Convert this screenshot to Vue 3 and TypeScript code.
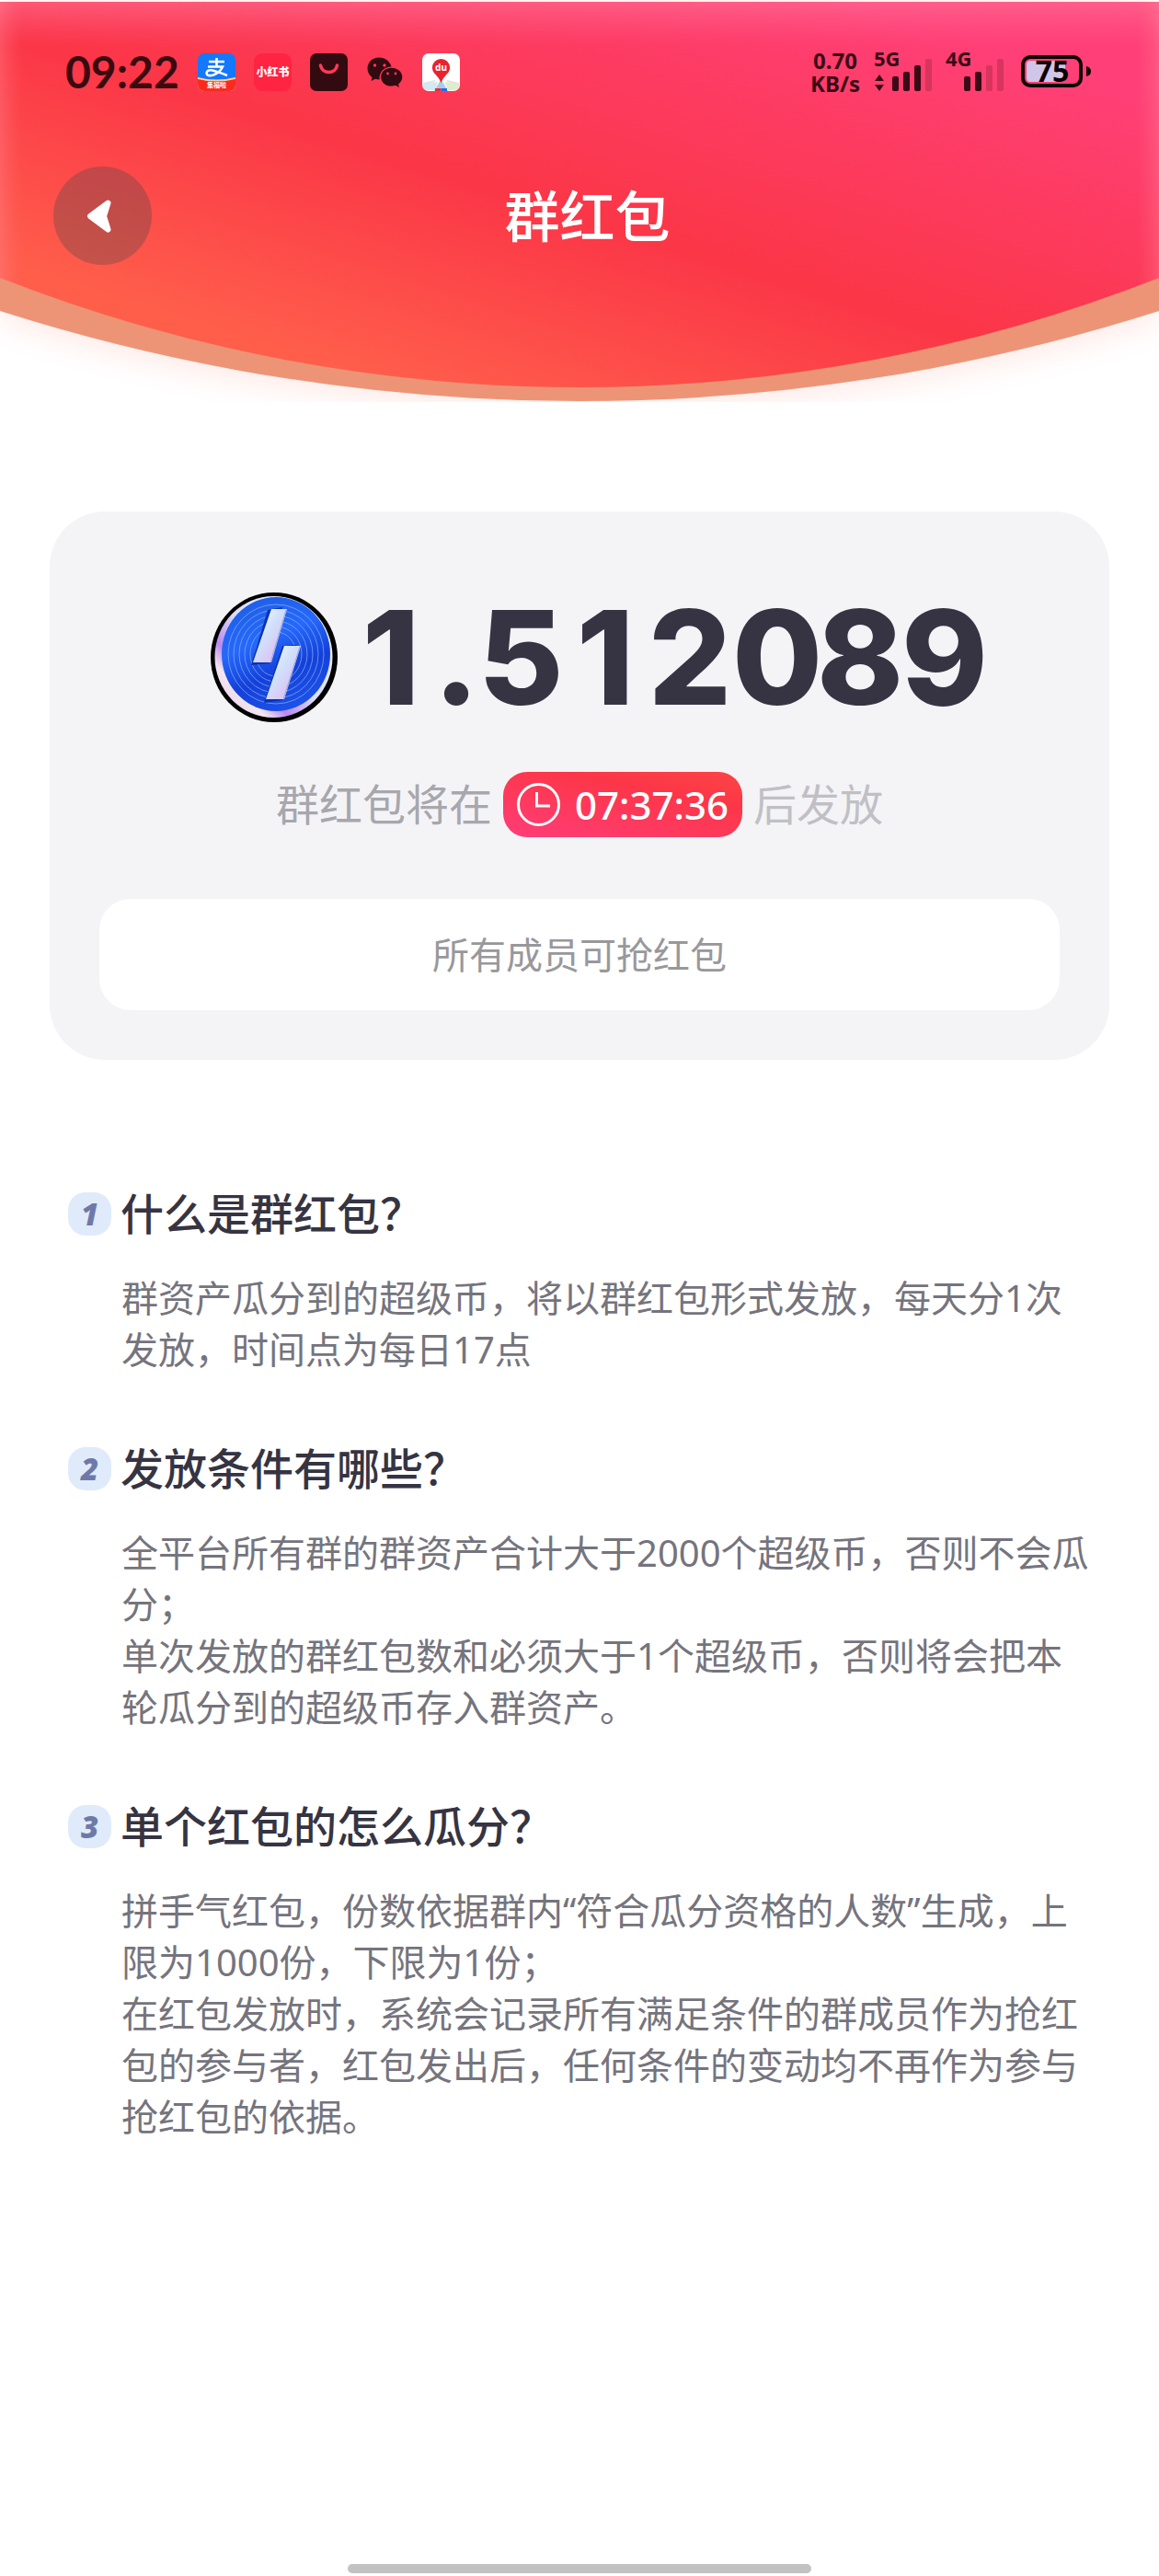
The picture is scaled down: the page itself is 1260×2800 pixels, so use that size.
<script setup lang="ts">
interface Rule {
  title: string
  paragraphs: string[]
}

const amount = '1.512089'
const countdown = '07:37:36'

const rules: Rule[] = [
  {
    title: '什么是群红包？',
    paragraphs: ['群资产瓜分到的超级币，将以群红包形式发放，每天分1次发放，时间点为每日17点'],
  },
  {
    title: '发放条件有哪些？',
    paragraphs: [
      '全平台所有群的群资产合计大于2000个超级币，否则不会瓜分；',
      '单次发放的群红包数和必须大于1个超级币，否则将会把本轮瓜分到的超级币存入群资产。',
    ],
  },
  {
    title: '单个红包的怎么瓜分？',
    paragraphs: [
      '拼手气红包，份数依据群内“符合瓜分资格的人数”生成，上限为1000份，下限为1份；',
      '在红包发放时，系统会记录所有满足条件的群成员作为抢红包的参与者，红包发出后，任何条件的变动均不再作为参与抢红包的依据。',
    ],
  },
]

const rings = [22, 28, 34, 40, 46, 52]
const signals = [
  { label: '5G', active: 3, arrows: true },
  { label: '4G', active: 2, arrows: false },
]
const bars = [
  { x: 20, y: 28 },
  { x: 32, y: 23 },
  { x: 44, y: 16 },
  { x: 56, y: 9 },
]
</script>

<template>
  <div class="page">
    <header class="hero">
      <svg class="hero-bg" viewBox="0 0 1260 437" preserveAspectRatio="none" aria-hidden="true">
        <defs>
          <linearGradient id="heroFill" gradientUnits="userSpaceOnUse" x1="1125" y1="60" x2="960" y2="585">
            <stop offset="0" stop-color="#ff4078" />
            <stop offset="0.57" stop-color="#fb3647" />
            <stop offset="1" stop-color="#ff5e4b" />
          </linearGradient>
          <linearGradient id="edgeTop" x1="0" y1="0" x2="0" y2="1">
            <stop offset="0" stop-color="#ff7fa0" stop-opacity="0.5" />
            <stop offset="1" stop-color="#ff5f8c" stop-opacity="0" />
          </linearGradient>
          <linearGradient id="edgeLeft">
            <stop offset="0" stop-color="#ff8fa0" stop-opacity="0.3" />
            <stop offset="1" stop-color="#ff7080" stop-opacity="0" />
          </linearGradient>
          <linearGradient id="edgeRight" x1="1" x2="0">
            <stop offset="0" stop-color="#ff8fa0" stop-opacity="0.3" />
            <stop offset="1" stop-color="#ff7080" stop-opacity="0" />
          </linearGradient>
          <clipPath id="heroClip">
            <path d="M0 2H1260V302A1727 1727 0 0 1 0 302Z" />
          </clipPath>
          <filter id="soft" x="-10%" y="-10%" width="120%" height="130%">
            <feGaussianBlur stdDeviation="18" />
          </filter>
        </defs>
        <path d="M0 0H1260V344A2074 2074 0 0 1 0 344Z" fill="#ff6a50" opacity="0.16" filter="url(#soft)" />
        <path d="M0 2H1260V338A2074 2074 0 0 1 0 338Z" fill="#ee9476" />
        <g clip-path="url(#heroClip)">
          <rect width="1260" height="437" fill="url(#heroFill)" />
          <rect width="1260" height="50" fill="url(#edgeTop)" />
          <rect width="24" height="437" fill="url(#edgeLeft)" />
          <rect x="1236" width="24" height="437" fill="url(#edgeRight)" />
        </g>
      </svg>

      <div class="status">
        <div class="status-left">
          <span class="clock">09:22</span>
          <svg class="app" viewBox="0 0 41 41">
            <defs>
              <clipPath id="appClip"><rect width="41" height="41" rx="7" /></clipPath>
            </defs>
            <g clip-path="url(#appClip)">
              <rect width="41" height="41" fill="#1478fb" />
              <path d="M0 26Q20 31 41 26V41H0Z" fill="#ffd08a" />
              <path d="M0 28Q20 33 41 28V41H0Z" fill="#fb2a1e" />
            </g>
            <path d="M12 9H29M20.500 5V14M11 14.500H27Q24 21 17 23.500Q10 25.500 9.500 21.500Q10 17.500 16 18.500Q22 20 32 24" fill="none" stroke="#fff" stroke-width="2.600" />
            <text x="20.500" y="37" text-anchor="middle" font-size="7" font-weight="700" fill="#fff">集福啦</text>
          </svg>
          <svg class="app" viewBox="0 0 41 41">
            <rect width="41" height="41" rx="9" fill="#ff2442" />
            <text x="20.500" y="25" text-anchor="middle" font-size="12" font-weight="900" fill="#fff">小红书</text>
          </svg>
          <svg class="app" viewBox="0 0 41 41">
            <rect width="41" height="41" rx="7" fill="#330a10" />
            <path d="M11.500 13C13 23 28 23 29.500 13" fill="none" stroke="#ff3b55" stroke-width="3.600" stroke-linecap="round" />
          </svg>
          <svg class="app" viewBox="0 0 41 41">
            <path d="M14 4.500C6.500 4.500 1.500 10 1.500 16.500C1.500 20.500 3.500 24 6.500 26L5.500 30L10 27.700C11.500 28.300 13 28.500 14.500 28.500C14 20 20 14.500 27.500 14.500C26 8.500 20.500 4.500 14 4.500Z" fill="#330a10" />
            <path d="M27.500 15.800C21 15.800 16.200 20 16.200 25.700C16.200 31.400 21 35.600 27.500 35.600C29 35.600 30.500 35.300 32 34.800L36 37L35 33.500C37.700 31.600 39.300 28.800 39.300 25.700C39.300 20 34 15.800 27.500 15.800Z" fill="#330a10" />
            <g fill="#ff3b57">
              <circle cx="9.500" cy="13" r="1.700" />
              <circle cx="20" cy="13" r="1.700" />
              <circle cx="23.500" cy="22" r="1.400" />
              <circle cx="32" cy="22" r="1.400" />
            </g>
          </svg>
          <svg class="app" viewBox="0 0 41 41">
            <rect width="41" height="41" rx="7" fill="#fff" />
            <path d="M1 33L17 31L14 40H7Q1 40 1 35Z" fill="#cfeaf0" />
            <path d="M24 31L40 33V35Q40 40 34 40H28Z" fill="#dcefc8" />
            <path d="M20.500 28L28 41H13Z" fill="#a9cbe8" />
            <path d="M1 33L14 30M40 33L27 30" stroke="#e3e3e3" stroke-width="2" />
            <path d="M14 38H20.500V41H14Z" fill="#e0303c" />
            <path d="M20.500 38H27V41H20.500Z" fill="#1f6df2" />
            <path d="M20.500 6A9.600 9.600 0 0 0 10.900 15.600C10.900 22 17.500 24 20.500 32C23.500 24 30.100 22 30.100 15.600A9.600 9.600 0 0 0 20.500 6Z" fill="#e8232f" />
            <text x="20.500" y="19" text-anchor="middle" font-size="10" font-weight="700" fill="#fff">du</text>
          </svg>
        </div>

        <div class="status-right">
          <div class="speed"><span>0.70</span><span>KB/s</span></div>
          <svg v-for="s in signals" :key="s.label" class="signal" viewBox="0 0 64 46">
            <text x="0" y="17" font-size="22" font-weight="700" fill="#3a0a16">{{ s.label }}</text>
            <path v-if="s.arrows" d="M6 26L11 33H1ZM6 44L11 37H1Z" fill="#3a0a16" />
            <rect
              v-for="(b, i) in bars"
              :key="b.x"
              :x="b.x"
              :y="b.y"
              width="7"
              :height="44 - b.y"
              rx="2"
              fill="#3a0a16"
              :opacity="i < s.active ? 1 : 0.2"
            />
          </svg>
          <svg class="battery" viewBox="0 0 76 36">
            <rect x="2" y="2" width="63" height="31" rx="8" fill="none" stroke="#0d0003" stroke-width="4" />
            <rect x="6" y="6" width="42" height="23" rx="4" fill="#cfc6ea" />
            <path d="M71 12Q76 13 76 17.500Q76 22 71 23Z" fill="#0d0003" />
            <text x="34" y="29" text-anchor="middle" font-size="32" font-weight="700" fill="#0d0003">75</text>
          </svg>
        </div>
      </div>

      <div class="nav">
        <button class="back" type="button" aria-label="返回">
          <svg viewBox="0 0 26 36" aria-hidden="true">
            <path d="M22.500 3.500L3 18L22.500 32.500L18 18Z" fill="#fff" stroke="#fff" stroke-width="6" stroke-linejoin="round" />
          </svg>
        </button>
        <h1>群红包</h1>
      </div>
    </header>

    <main>
      <section class="card">
        <div class="amount">
          <svg class="coin" viewBox="0 0 138 141" aria-hidden="true">
            <defs>
              <linearGradient id="rim" x1="1" y1="0" x2="0" y2="1">
                <stop offset="0" stop-color="#f4f4fc" />
                <stop offset="0.5" stop-color="#dcdcf6" />
                <stop offset="0.68" stop-color="#b98af0" />
                <stop offset="0.78" stop-color="#f4e8ee" />
                <stop offset="0.9" stop-color="#e9d3ee" />
                <stop offset="1" stop-color="#8f7af0" />
              </linearGradient>
              <linearGradient id="face" x1="0.3" y1="0" x2="0.7" y2="1">
                <stop offset="0" stop-color="#1e5fe6" />
                <stop offset="0.35" stop-color="#2569fb" />
                <stop offset="0.65" stop-color="#1340d8" />
                <stop offset="1" stop-color="#1d55ea" />
              </linearGradient>
              <linearGradient id="bolt" x1="0" y1="0" x2="1" y2="1">
                <stop offset="0" stop-color="#ffffff" />
                <stop offset="0.45" stop-color="#cfe0fb" />
                <stop offset="0.7" stop-color="#dcc8f4" />
                <stop offset="1" stop-color="#eef0fc" />
              </linearGradient>
            </defs>
            <ellipse cx="69" cy="70.500" rx="69" ry="70.500" fill="#000" />
            <ellipse cx="68.500" cy="70" rx="64" ry="66" fill="url(#rim)" />
            <ellipse cx="71" cy="67" rx="59" ry="62" fill="url(#face)" />
            <ellipse v-for="r in rings" :key="r" cx="71" cy="67" :rx="r" :ry="r + 2" fill="none" stroke="#86a8f6" stroke-width="1" opacity="0.75" />
            <path d="M62 19L78 16L64 77L44 79Z" fill="#0c32b4" />
            <path d="M78 58L93 57L78 117L58 120Z" fill="#0c32b4" />
            <path d="M66 18H83L66 76H46Z" fill="url(#bolt)" />
            <path d="M80 58H98L80 116H60Z" fill="url(#bolt)" />
            <path d="M82 19L65 76M97 59L79 116" fill="none" stroke="#9aa9dc" stroke-width="1" />
          </svg>
          <strong><span v-for="(ch, i) in amount" :key="i" :class="ch === '.' ? 'dot' : 'digit'">{{ ch }}</span></strong>
        </div>

        <div class="timer">
          <span class="before">群红包将在</span>
          <time class="pill">
            <svg viewBox="0 0 47 47" aria-hidden="true">
              <circle cx="23.500" cy="23.500" r="22" fill="none" stroke="#fff" stroke-width="3" />
              <path d="M21.500 10V25H36" fill="none" stroke="#fff" stroke-width="3" />
            </svg>
            {{ countdown }}
          </time>
          <span class="after">后发放</span>
        </div>

        <p class="notice">所有成员可抢红包</p>
      </section>

      <ol class="rules">
        <li v-for="(rule, i) in rules" :key="rule.title">
          <h2><span class="badge">{{ i + 1 }}</span>{{ rule.title }}</h2>
          <div class="text">
            <p v-for="p in rule.paragraphs" :key="p">{{ p }}</p>
          </div>
        </li>
      </ol>
    </main>

    <div class="home-bar"></div>
  </div>
</template>

<style>
body {
  margin: 0;
  background: #fff;
}
</style>

<style scoped>
.page {
  display: flex;
  flex-direction: column;
  min-height: 100vh;
  box-sizing: border-box;
  background: #fff;
  font-family: "Noto Sans", "Noto Sans CJK SC", sans-serif;
}

h1,
h2,
p,
ol {
  margin: 0;
  padding: 0;
}

.hero {
  position: relative;
  height: 437px;
}

.hero-bg {
  position: absolute;
  inset: 0;
  width: 100%;
  height: 100%;
}

.status {
  position: relative;
  display: flex;
  justify-content: space-between;
  padding: 54px 74px 0 71px;
  height: 48px;
}

.status-left,
.status-right {
  display: flex;
  align-items: center;
}

.status-left {
  gap: 20px;
}

.clock {
  width: 124px;
  font: 700 48px/48px Lato, sans-serif;
  color: #3a0a10;
}

.app {
  width: 41px;
  height: 41px;
}

.status-right {
  gap: 14px;
}

.speed {
  display: flex;
  flex-direction: column;
  align-items: center;
  width: 56px;
  font-size: 24px;
  font-weight: 700;
  line-height: 25px;
  color: #3a0a16;
}

.signal {
  width: 64px;
  height: 46px;
  overflow: visible;
}

.battery {
  width: 76px;
  height: 36px;
  margin-left: 4px;
  overflow: visible;
}

.nav {
  position: relative;
  display: grid;
  grid-template-columns: 107px 1fr 90px;
  align-items: center;
  padding: 79px 58px 0;
}

.back {
  display: grid;
  place-items: center;
  width: 107px;
  height: 107px;
  padding: 0 8px 0 0;
  border: 0;
  border-radius: 50%;
  background: rgba(60, 68, 72, 0.3);
  cursor: pointer;
}

.back svg {
  width: 26px;
  height: 36px;
}

h1 {
  text-align: center;
  font-size: 60px;
  font-weight: 500;
  line-height: 80px;
  color: #fff;
}

main {
  flex: 1;
}

.card {
  margin: 119px 54px 0;
  padding: 88px 54px 54px;
  border-radius: 60px;
  background: #f4f4f7;
}

.amount {
  display: flex;
  align-items: center;
  justify-content: center;
  gap: 12px;
  height: 141px;
  padding-left: 41px;
}

.coin {
  flex: none;
  width: 138px;
  height: 141px;
}

.amount strong {
  font: 800 142px/141px Inter, sans-serif;
  white-space: nowrap;
  color: #363442;
}

.digit,
.dot {
  display: inline-block;
  width: 92px;
  text-align: center;
}

.dot {
  width: 49px;
}

.timer {
  display: flex;
  align-items: center;
  justify-content: center;
  gap: 12px;
  margin-top: 54px;
  font-size: 47px;
  line-height: 71px;
}

.before {
  color: #a7a7ad;
}

.after {
  color: #c0c0c4;
}

.pill {
  display: flex;
  align-items: center;
  gap: 16px;
  height: 71px;
  padding: 0 15px;
  border-radius: 26px;
  background: linear-gradient(12deg, #ff3d78 0%, #fc3648 68%, #fc4545 100%);
  font: 500 42px/71px "Noto Sans", sans-serif;
  color: #fff;
}

.pill svg {
  width: 47px;
  height: 47px;
}

.notice {
  margin-top: 67px;
  border-radius: 34px;
  background: #fff;
  text-align: center;
  font-size: 40px;
  line-height: 121px;
  color: #98989b;
}

.rules {
  display: flex;
  flex-direction: column;
  gap: 73px;
  margin-top: 139px;
  padding: 0 72px 0 74px;
  list-style: none;
}

h2 {
  display: flex;
  align-items: center;
  gap: 10px;
  font-size: 47px;
  font-weight: 500;
  line-height: 56px;
  color: #363442;
}

.badge {
  width: 47px;
  border-radius: 19px;
  background: #dfebfb;
  text-align: center;
  font: italic 800 33px/47px "Open Sans", sans-serif;
  color: #6f79a8;
}

.text {
  margin: 36px 0 0 58px;
  font-size: 40px;
  line-height: 56px;
  color: #75747d;
}

.home-bar {
  align-self: center;
  width: 40%;
  height: 10px;
  margin-bottom: 3px;
  border-radius: 5px;
  background: #c2c2c2;
}
</style>
